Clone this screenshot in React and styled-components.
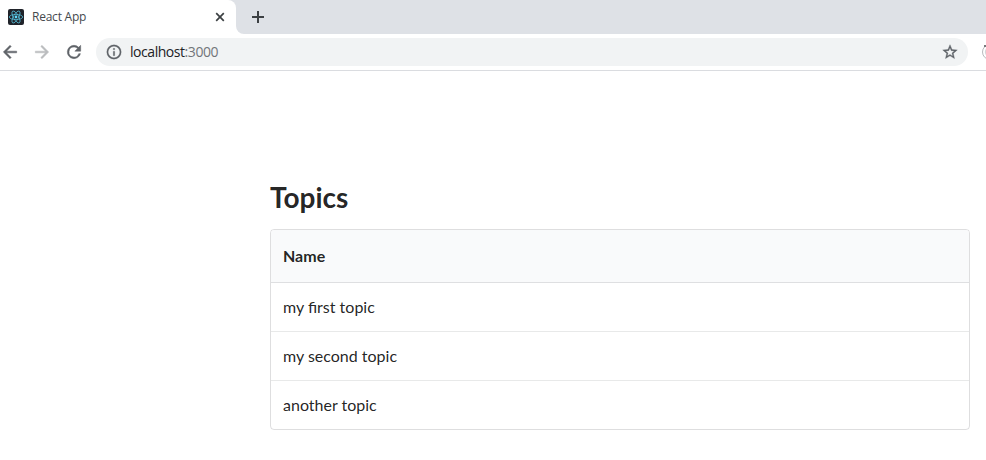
import React from "react";
import styled, { createGlobalStyle } from "styled-components";

const GlobalStyle = createGlobalStyle`
  *, *::before, *::after { box-sizing: border-box; }
  html, body { margin: 0; background: #fff; overflow: hidden; }
  body { font-family: Lato, sans-serif; color: rgba(0, 0, 0, 0.87); }
`;

const Window = styled.div`
  width: 986px;
  height: 460px;
  overflow: hidden;
  background: #fff;
`;

const TabStrip = styled.div`
  display: flex;
  height: 34px;
  background: #dee1e6;
`;

const Tab = styled.div`
  display: flex;
  align-items: center;
  width: 236px;
  height: 34px;
  padding: 0 10px 0 8px;
  background: #fff;
  border-top-right-radius: 8px;
`;

const TabTitle = styled.span`
  flex: 1;
  margin-left: 8px;
  font: 12px/16px "Open Sans", sans-serif;
  letter-spacing: -0.23px;
  color: #45494d;
`;

const NewTabArea = styled.div`
  flex: 1;
  display: flex;
  align-items: center;
  padding-left: 14px;
  background: #dee1e6;
  border-bottom-left-radius: 8px;
`;

const StripEnd = styled.div`
  flex: 1;
  display: flex;
  background: linear-gradient(#dee1e6 50%, #fff 50%);
`;

const Toolbar = styled.div`
  display: flex;
  align-items: center;
  height: 37px;
  border-bottom: 1px solid #dadce0;
`;

const Icon = styled.svg`
  display: block;
  flex: none;
  width: ${(p) => p.$size}px;
  height: ${(p) => p.$size}px;
  margin-left: ${(p) => p.$gap || 0}px;
  fill: ${(p) => p.$color || "#5f6368"};
`;

const ToolIcon = styled(Icon)`
  stroke: ${(p) => p.$color || "#5f6368"};
  stroke-width: ${(p) => p.$bold || 0.6};
`;

const AddressBar = styled.div`
  display: flex;
  flex: none;
  align-items: center;
  width: 872px;
  height: 28px;
  margin-left: 12px;
  padding: 0 10px;
  border-radius: 14px;
  background: #f1f3f4;
`;

const Url = styled.span`
  flex: 1;
  margin-left: 8px;
  font: 14px/20px "Open Sans", sans-serif;
  letter-spacing: -0.45px;
  color: #202124;
`;

const Port = styled.span`
  color: #71757a;
`;

const Content = styled.main`
  width: 700px;
  margin: 108px 0 0 270px;
`;

const Title = styled.h1`
  margin: 0 0 14px;
  font-size: 28px;
  line-height: 36px;
  font-weight: 700;
`;

const Table = styled.table`
  width: 100%;
  border: 1px solid rgba(34, 36, 38, 0.15);
  border-radius: 4px;
  border-collapse: separate;
  border-spacing: 0;
  font-size: 16px;
  text-align: left;
`;

const HeadCell = styled.th`
  height: 53px;
  padding: 0 12px 2px;
  background: #f9fafb;
  border-bottom: 1px solid rgba(34, 36, 38, 0.12);
  border-radius: 3px 3px 0 0;
  font-weight: 700;
`;

const Row = styled.tr`
  & + & td { border-top: 1px solid rgba(34, 36, 38, 0.1); }
  &:first-child td { height: 48px; }
`;

const Cell = styled.td`
  height: 49px;
  padding: 0 12px 2px;
`;

const topics = ["my first topic", "my second topic", "another topic"];

function ReactLogo() {
  return (
    <Icon $size={16} viewBox="0 0 16 16">
      <rect width="16" height="16" rx="2" fill="#20232a" />
      <g fill="none" stroke="#53b9d3" strokeWidth="0.8">
        <ellipse cx="8" cy="8" rx="6.7" ry="2.6" />
        <ellipse cx="8" cy="8" rx="6.7" ry="2.6" transform="rotate(60 8 8)" />
        <ellipse cx="8" cy="8" rx="6.7" ry="2.6" transform="rotate(120 8 8)" />
      </g>
      <circle cx="8" cy="8" r="1.4" fill="#61dafb" />
    </Icon>
  );
}

export default function App() {
  return (
    <>
      <GlobalStyle />
      <Window>
        <TabStrip>
          <Tab>
            <ReactLogo />
            <TabTitle>React App</TabTitle>
            <Icon $size={12} viewBox="0 0 12 12">
              <path d="M2.2 2.2l7.6 7.6M9.8 2.2L2.2 9.8" stroke="#3c4043" strokeWidth="1.7" />
            </Icon>
          </Tab>
          <StripEnd>
            <NewTabArea>
              <Icon $size={16} viewBox="0 0 16 16">
                <path d="M7 2h2v5h5v2H9v5H7V9H2V7h5z" fill="#3c4043" />
              </Icon>
            </NewTabArea>
          </StripEnd>
        </TabStrip>
        <Toolbar>
          <ToolIcon $size={20} viewBox="0 0 24 24">
            <path d="M20 11H7.83l5.59-5.59L12 4l-8 8 8 8 1.41-1.41L7.83 13H20v-2z" />
          </ToolIcon>
          <ToolIcon $size={20} $gap={12} $color="#babcbe" viewBox="0 0 24 24">
            <path d="M12 4l-1.41 1.41L16.17 11H4v2h12.17l-5.58 5.59L12 20l8-8z" />
          </ToolIcon>
          <ToolIcon $size={20} $gap={12} viewBox="0 0 24 24">
            <path d="M17.65 6.35A7.96 7.96 0 0 0 12 4a8 8 0 1 0 7.73 10h-2.08A6 6 0 1 1 12 6c1.66 0 3.14.69 4.22 1.78L13 11h7V4l-2.35 2.35z" />
          </ToolIcon>
          <AddressBar>
            <ToolIcon $size={16} $bold={0.3} viewBox="1 1 22 22">
              <path d="M11 7h2v2h-2zm0 4h2v6h-2zm1-9a10 10 0 1 0 0 20 10 10 0 0 0 0-20zm0 18a8 8 0 1 1 0-16 8 8 0 0 1 0 16z" />
            </ToolIcon>
            <Url>localhost<Port>:3000</Port></Url>
            <ToolIcon $size={16} $bold={0.5} viewBox="1 1 22 22">
              <path d="M22 9.24l-7.19-.62L12 2 9.19 8.63 2 9.24l5.46 4.73L5.82 21 12 17.27 18.18 21l-1.63-7.03L22 9.24zM12 15.4l-3.76 2.27 1-4.28-3.32-2.88 4.38-.38L12 6.1l1.71 4.04 4.38.38-3.32 2.88 1 4.28L12 15.4z" />
            </ToolIcon>
          </AddressBar>
          <Icon $size={18} $gap={13} viewBox="0 0 18 18">
            <circle cx="9" cy="9" r="7.5" fill="none" stroke="#b8babd" />
            <circle cx="9" cy="9" r="4.7" fill="none" stroke="#cfd1d3" />
            <path d="M3 2h4v2H3z" fill="#77797c" />
          </Icon>
        </Toolbar>
        <Content>
          <Title>Topics</Title>
          <Table>
            <thead>
              <tr><HeadCell>Name</HeadCell></tr>
            </thead>
            <tbody>
              {topics.map((topic) => (
                <Row key={topic}><Cell>{topic}</Cell></Row>
              ))}
            </tbody>
          </Table>
        </Content>
      </Window>
    </>
  );
}
